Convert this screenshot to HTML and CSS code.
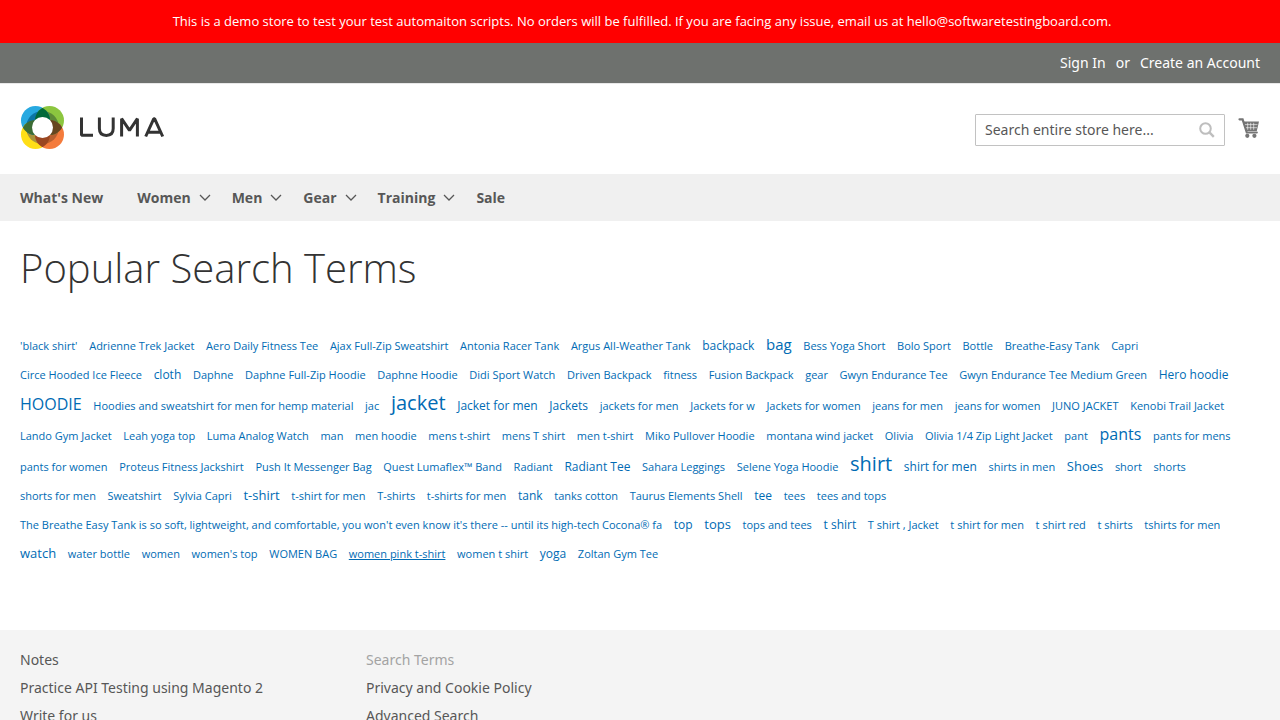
FILE: index.html
```html
<!DOCTYPE html>
<html lang="en">
<head>
<meta charset="utf-8">
<meta name="viewport" content="width=device-width, initial-scale=1">
<title>Popular Search Terms</title>
<link rel="stylesheet" href="styles.css">
</head>
<body>
<div class="notice">This is a demo store to test your test automaiton scripts. No orders will be fulfilled. If you are facing any issue, email us at hello@softwaretestingboard.com.</div>
<header>
  <div class="panel">
    <a class="panel-link" href="#">Sign In</a>
    <span>or</span>
    <a class="panel-link" href="#">Create an Account</a>
  </div>
  <div class="header-content">
    <a class="logo" href="#" aria-label="Luma">
      <svg width="148" height="45" viewBox="0 0 148 45" aria-hidden="true">
        <defs>
          <clipPath id="blue"><circle cx="15.500" cy="15.500" r="14.500"/></clipPath>
          <clipPath id="green"><circle cx="29.500" cy="15.500" r="14.500"/></clipPath>
          <clipPath id="yellow"><circle cx="15.500" cy="29.500" r="14.500"/></clipPath>
          <clipPath id="orange"><circle cx="29.500" cy="29.500" r="14.500"/></clipPath>
        </defs>
        <circle cx="15.500" cy="15.500" r="14.500" fill="#27a9e1"/>
        <circle cx="29.500" cy="15.500" r="14.500" fill="#8cc63f"/>
        <circle cx="15.500" cy="29.500" r="14.500" fill="#ffde17"/>
        <circle cx="29.500" cy="29.500" r="14.500" fill="#f47b3c"/>
        <circle cx="22.500" cy="22.500" r="16.500" fill="#a8923a" clip-path="url(#yellow)"/>
        <circle cx="22.500" cy="22.500" r="16.500" fill="#b9602f" clip-path="url(#orange)"/>
        <circle cx="22.500" cy="22.500" r="16.500" fill="#5c8a37" clip-path="url(#green)"/>
        <circle cx="22.500" cy="22.500" r="16.500" fill="#0b75a5" clip-path="url(#blue)"/>
        <circle cx="15.500" cy="29.500" r="14.500" fill="#3c6c35" clip-path="url(#blue)"/>
        <circle cx="29.500" cy="29.500" r="14.500" fill="#66461f" clip-path="url(#green)"/>
        <circle cx="15.500" cy="15.500" r="14.500" fill="#00693a" clip-path="url(#green)"/>
        <circle cx="15.500" cy="29.500" r="14.500" fill="#9a4722" clip-path="url(#orange)"/>
        <circle cx="22.500" cy="22.500" r="10.500" fill="#fff"/>
        <g fill="none" stroke="#333" stroke-width="3" stroke-linejoin="bevel">
          <path d="M61.500 12.500v17.700H73M79.400 12.500v11c0 4.500 2.600 6.900 6.900 6.900s6.900-2.400 6.900-6.900v-11M101.600 31.500V13.700l7.900 11.600 7.900-11.600v17.800M125.700 31.500l8-17.700h1l8 17.700M128.200 27.200h12"/>
        </g>
      </svg>
    </a>
    <form class="search" role="search">
      <input class="search-input" type="text" placeholder="Search entire store here..." aria-label="Search">
      <button class="search-button" type="button" aria-label="Search">
        <svg width="16" height="16" viewBox="0 0 16 16" fill="none" stroke="#bebebe" aria-hidden="true"><circle cx="6.500" cy="6.500" r="5.300" stroke-width="2"/><path d="M10.200 10.200l4.600 4.600" stroke-width="2.400"/></svg>
      </button>
    </form>
    <a class="cart" href="#" aria-label="My Cart">
      <svg width="22" height="22" viewBox="0 0 22 22" aria-hidden="true">
        <path d="M1.500 2.300H4.600l4.200 13.200h10" fill="none" stroke="#757575" stroke-width="2.200" stroke-linecap="round"/>
        <path d="M4.800 4.500H21L18.800 14H7.800z" fill="#757575"/>
        <path d="M7 7.600h12.500M8 10.700h11M9.700 5.800v7M12.700 5.800v7M15.700 5.800v7" stroke="#fff" stroke-width=".6"/>
        <circle cx="9.300" cy="18.800" r="2.100" fill="#757575"/><circle cx="16.400" cy="18.800" r="2.100" fill="#757575"/>
      </svg>
    </a>
  </div>
</header>
<nav class="nav">
  <a class="nav-link nav-first" href="#">What's New</a>
  <a class="nav-link" href="#">Women <svg class="chevron" viewBox="0 0 12 8"><path d="M1 1l5 5 5-5"/></svg></a>
  <a class="nav-link" href="#">Men <svg class="chevron" viewBox="0 0 12 8"><path d="M1 1l5 5 5-5"/></svg></a>
  <a class="nav-link" href="#">Gear <svg class="chevron" viewBox="0 0 12 8"><path d="M1 1l5 5 5-5"/></svg></a>
  <a class="nav-link" href="#">Training <svg class="chevron" viewBox="0 0 12 8"><path d="M1 1l5 5 5-5"/></svg></a>
  <a class="nav-link" href="#">Sale</a>
</nav>
<main>
  <h1>Popular Search Terms</h1>
  <ul class="terms">
    <li><a href="#">'black shirt'</a></li>
    <li><a href="#">Adrienne Trek Jacket</a></li>
    <li><a href="#">Aero Daily Fitness Tee</a></li>
    <li><a href="#">Ajax Full-Zip Sweatshirt</a></li>
    <li><a href="#">Antonia Racer Tank</a></li>
    <li><a href="#">Argus All-Weather Tank</a></li>
    <li><a class="s12" href="#">backpack</a></li>
    <li><a class="s15" href="#">bag</a></li>
    <li><a href="#">Bess Yoga Short</a></li>
    <li><a href="#">Bolo Sport</a></li>
    <li><a href="#">Bottle</a></li>
    <li><a href="#">Breathe-Easy Tank</a></li>
    <li><a href="#">Capri</a></li>
    <li><a href="#">Circe Hooded Ice Fleece</a></li>
    <li><a class="s12" href="#">cloth</a></li>
    <li><a href="#">Daphne</a></li>
    <li><a href="#">Daphne Full-Zip Hoodie</a></li>
    <li><a href="#">Daphne Hoodie</a></li>
    <li><a href="#">Didi Sport Watch</a></li>
    <li><a href="#">Driven Backpack</a></li>
    <li><a href="#">fitness</a></li>
    <li><a href="#">Fusion Backpack</a></li>
    <li><a href="#">gear</a></li>
    <li><a href="#">Gwyn Endurance Tee</a></li>
    <li><a href="#">Gwyn Endurance Tee Medium Green</a></li>
    <li><a class="s12" href="#">Hero hoodie</a></li>
    <li><a class="s16" href="#">HOODIE</a></li>
    <li><a href="#">Hoodies and sweatshirt for men for hemp material</a></li>
    <li><a href="#">jac</a></li>
    <li><a class="s20" href="#">jacket</a></li>
    <li><a class="s12" href="#">Jacket for men</a></li>
    <li><a class="s12" href="#">Jackets</a></li>
    <li><a href="#">jackets for men</a></li>
    <li><a href="#">Jackets for w</a></li>
    <li><a href="#">Jackets for women</a></li>
    <li><a href="#">jeans for men</a></li>
    <li><a href="#">jeans for women</a></li>
    <li><a href="#">JUNO JACKET</a></li>
    <li><a href="#">Kenobi Trail Jacket</a></li>
    <li><a href="#">Lando Gym Jacket</a></li>
    <li><a href="#">Leah yoga top</a></li>
    <li><a href="#">Luma Analog Watch</a></li>
    <li><a href="#">man</a></li>
    <li><a href="#">men hoodie</a></li>
    <li><a href="#">mens t-shirt</a></li>
    <li><a href="#">mens T shirt</a></li>
    <li><a href="#">men t-shirt</a></li>
    <li><a href="#">Miko Pullover Hoodie</a></li>
    <li><a href="#">montana wind jacket</a></li>
    <li><a href="#">Olivia</a></li>
    <li><a href="#">Olivia 1/4 Zip Light Jacket</a></li>
    <li><a href="#">pant</a></li>
    <li><a class="s16" href="#">pants</a></li>
    <li><a href="#">pants for mens</a></li>
    <li><a href="#">pants for women</a></li>
    <li><a href="#">Proteus Fitness Jackshirt</a></li>
    <li><a href="#">Push It Messenger Bag</a></li>
    <li><a href="#">Quest Lumaflex™ Band</a></li>
    <li><a href="#">Radiant</a></li>
    <li><a class="s12" href="#">Radiant Tee</a></li>
    <li><a href="#">Sahara Leggings</a></li>
    <li><a href="#">Selene Yoga Hoodie</a></li>
    <li><a class="s20" href="#">shirt</a></li>
    <li><a class="s12" href="#">shirt for men</a></li>
    <li><a href="#">shirts in men</a></li>
    <li><a class="s13" href="#">Shoes</a></li>
    <li><a href="#">short</a></li>
    <li><a href="#">shorts</a></li>
    <li><a href="#">shorts for men</a></li>
    <li><a href="#">Sweatshirt</a></li>
    <li><a href="#">Sylvia Capri</a></li>
    <li><a class="s13" href="#">t-shirt</a></li>
    <li><a href="#">t-shirt for men</a></li>
    <li><a href="#">T-shirts</a></li>
    <li><a href="#">t-shirts for men</a></li>
    <li><a class="s12" href="#">tank</a></li>
    <li><a href="#">tanks cotton</a></li>
    <li><a href="#">Taurus Elements Shell</a></li>
    <li><a class="s12" href="#">tee</a></li>
    <li><a href="#">tees</a></li>
    <li><a href="#">tees and tops</a></li>
    <li><a href="#">The Breathe Easy Tank is so soft, lightweight, and comfortable, you won't even know it's there -- until its high-tech Cocona® fa</a></li>
    <li><a class="s12" href="#">top</a></li>
    <li><a class="s13" href="#">tops</a></li>
    <li><a href="#">tops and tees</a></li>
    <li><a class="s12" href="#">t shirt</a></li>
    <li><a href="#">T shirt , Jacket</a></li>
    <li><a href="#">t shirt for men</a></li>
    <li><a href="#">t shirt red</a></li>
    <li><a href="#">t shirts</a></li>
    <li><a href="#">tshirts for men</a></li>
    <li><a class="s13" href="#">watch</a></li>
    <li><a href="#">water bottle</a></li>
    <li><a href="#">women</a></li>
    <li><a href="#">women's top</a></li>
    <li><a href="#">WOMEN BAG</a></li>
    <li><a class="underlined" href="#">women pink t-shirt</a></li>
    <li><a href="#">women t shirt</a></li>
    <li><a class="s12" href="#">yoga</a></li>
    <li><a href="#">Zoltan Gym Tee</a></li>
  </ul>
</main>
<footer class="footer">
  <ul class="footer-links">
    <li><a href="#">Notes</a></li>
    <li><a href="#">Practice API Testing using Magento 2</a></li>
    <li><a href="#">Write for us</a></li>
  </ul>
  <ul class="footer-links">
    <li class="current">Search Terms</li>
    <li><a href="#">Privacy and Cookie Policy</a></li>
    <li><a href="#">Advanced Search</a></li>
  </ul>
</footer>
</body>
</html>
```
FILE: styles.css
```css
* { box-sizing: border-box; }
body {
  margin: 0;
  font-family: "Noto Sans", "Open Sans", sans-serif;
  font-size: 14px;
  line-height: 20px;
  color: #333;
  background: #fff;
}
a { text-decoration: none; color: inherit; }
ul { margin: 0; padding: 0; list-style: none; }
.notice, .nav, main { font-family: "Open Sans", "Noto Sans", sans-serif; }
.notice {
  background: #f00;
  color: #fff;
  font-size: 13px;
  line-height: 19px;
  padding: 12px 16px 12px 20px;
  text-align: center;
}
.panel {
  display: flex;
  justify-content: flex-end;
  gap: 10px;
  padding: 10px 20px;
  background: #6e716e;
  color: #fff;
}
.header-content {
  display: flex;
  align-items: center;
  padding: 21px 20px 24px;
  border-top: 1px solid #e8e8e8;
}
.logo { margin-right: auto; }
.logo svg, .cart svg { display: block; }
.search {
  display: flex;
  align-items: center;
  width: 250px;
  height: 32px;
  margin-top: 4px;
  border: 1px solid #c2c2c2;
  border-radius: 1px;
  background: #fff;
}
.search-input {
  flex: 1;
  min-width: 0;
  padding: 0 0 0 9px;
  border: 0;
  outline: 0;
  background: none;
  font: inherit;
}
.search-input::placeholder { color: #575757; opacity: 1; }
.search-button {
  display: flex;
  padding: 0 9px;
  border: 0;
  background: none;
}
.cart { margin-left: 13px; }
.nav {
  display: flex;
  gap: 21px;
  padding: 0 20px;
  background: #f0f0f0;
  color: #575757;
  font-weight: 700;
  line-height: 47px;
}
.nav-link { display: flex; align-items: center; gap: 8px; }
.nav-first { margin-right: 13px; }
.chevron {
  width: 12px;
  height: 8px;
  fill: none;
  stroke: #575757;
  stroke-width: 1.3;
}
main { padding: 20px 20px 0; }
h1 {
  margin: 0 0 35px;
  font-size: 40px;
  font-weight: 300;
  line-height: 54px;
}
.terms { line-height: 28px; }
.terms li { display: inline-block; margin-right: 8px; }
.terms a { color: #006bb4; font-size: 11px; }
.terms .s12 { font-size: 12px; }
.terms .s13 { font-size: 13px; }
.terms .s15 { font-size: 15px; }
.terms .s16 { font-size: 16px; }
.terms .s20 { font-size: 20px; }
.terms .underlined { text-decoration: underline; }
.footer {
  display: flex;
  gap: 103px;
  margin-top: 62px;
  padding: 20px 20px 40px;
  background: #f4f4f4;
  color: #575757;
}
.footer-links li { margin-bottom: 8px; }
.current { color: #a3a3a3; }
```
